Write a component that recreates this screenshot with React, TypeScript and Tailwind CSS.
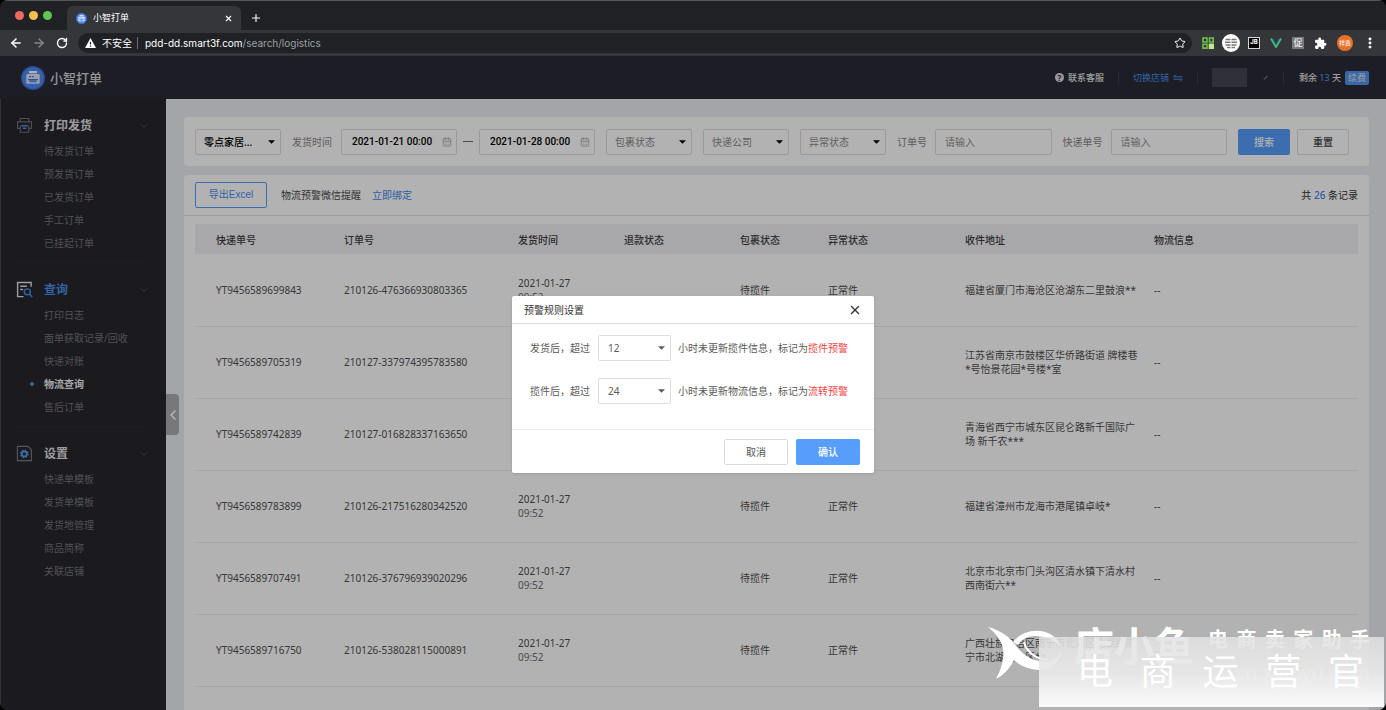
import { useState } from "react";
import type { ReactNode } from "react";
import {
  ArrowLeft,
  ArrowRight,
  CalendarDays,
  ChevronDown,
  ChevronLeft,
  EllipsisVertical,
  Plus,
  RotateCw,
  Star,
  X,
} from "lucide-react";
import { MdExtension } from "react-icons/md";

const menu = [
  {
    title: "打印发货",
    icon: "print",
    items: ["待发货订单", "预发货订单", "已发货订单", "手工订单", "已挂起订单"],
  },
  {
    title: "查询",
    icon: "search",
    items: ["打印日志", "面单获取记录/回收", "快递对账", "物流查询", "售后订单"],
  },
  {
    title: "设置",
    icon: "setting",
    items: ["快递单模板", "发货单模板", "发货地管理", "商品简称", "关联店铺"],
  },
];

const columns = [
  { title: "快递单号", width: "w-[137px]" },
  { title: "订单号", width: "w-[174px]" },
  { title: "发货时间", width: "w-[106px]" },
  { title: "退款状态", width: "w-[116px]" },
  { title: "包裹状态", width: "w-[88px]" },
  { title: "异常状态", width: "w-[137px]" },
  { title: "收件地址", width: "w-[189px]" },
  { title: "物流信息", width: "" },
];

const rows = [
  { no: "YT9456589699843", order: "210126-476366930803365", address: "福建省厦门市海沧区沧湖东二里鼓浪**" },
  { no: "YT9456589705319", order: "210127-337974395783580", address: "江苏省南京市鼓楼区华侨路街道 牌楼巷*号怡景花园*号楼*室" },
  { no: "YT9456589742839", order: "210127-016828337163650", address: "青海省西宁市城东区昆仑路新千国际广场 新千农***" },
  { no: "YT9456589783899", order: "210126-217516280342520", address: "福建省漳州市龙海市港尾镇卓岐*" },
  { no: "YT9456589707491", order: "210126-376796939020296", address: "北京市北京市门头沟区清水镇下清水村西南街六**" },
  { no: "YT9456589716750", order: "210126-538028115000891", address: "广西壮族自治区南宁市北湖区北湖路南宁市北湖路小区**" },
];

const Caret = () => (
  <svg viewBox="0 0 8 4" className="pointer-events-none absolute right-[6px] top-[11px] h-1 w-[7px]" fill="currentColor">
    <path d="M0 0h8L4 4z" />
  </svg>
);

const Logo = ({ className }: { className: string }) => (
  <svg viewBox="0 0 24 24" className={className}>
    <circle cx="12" cy="12" r="11.3" fill="#5189f5" stroke="#3f6fd8" strokeWidth="1.4" />
    <path d="M8 5h8v2.2H8z" fill="#fff" />
    <rect x="5.3" y="8" width="13.4" height="9.8" rx="1.2" fill="#dfe6f5" />
    <path d="M7 13.6h10M8.2 10.6h2M11 10.6h1.6" stroke="#3f6fd8" strokeWidth="1.4" />
    <path d="M8.4 14.3h7.2v2H8.4z" fill="#5189f5" />
  </svg>
);

const MenuIcon = ({ name }: { name: string }) => {
  if (name === "print") {
    return (
      <svg viewBox="0 0 18 18" className="size-[17px]" fill="none" stroke="#6d6e76" strokeWidth="1.2">
        <path d="M4.5 5V1.6h9V5M4.5 12H1.6V5.2h14.8V12h-2.9" />
        <path d="M4.5 9v7.2h9V9" />
        <path d="M5.5 9.2h7M7 12h4" stroke="#4a90e8" strokeWidth="1.6" />
      </svg>
    );
  }
  if (name === "search") {
    return (
      <svg viewBox="0 0 18 18" className="size-[17px]" fill="none" stroke="#e4e4e8" strokeWidth="1.5">
        <path d="M16 6V1.5H1.7v15H8M4.5 5.5h7M4.5 9h3" />
        <circle cx="12" cy="11.5" r="3.2" stroke="#4a90e8" />
        <path d="M14.4 14l2.8 3" stroke="#4a90e8" />
      </svg>
    );
  }
  return (
    <svg viewBox="0 0 18 18" className="size-[17px]" fill="none" stroke="#7b7c84" strokeWidth="1.2">
      <path d="M1.5 1.4h11.3l3.5 3.4v11.8H1.5z" />
      <circle cx="8.8" cy="9.4" r="2.6" stroke="#5a9cf0" strokeWidth="1.8" />
      <circle cx="8.8" cy="9.4" r="4" stroke="#5a9cf0" strokeWidth="1.5" strokeDasharray="1.6 1.54" />
    </svg>
  );
};

const BrowserBar = () => (
  <div className="shrink-0 bg-[#202124] text-white">
    <div className="flex h-[30px] items-end border-t border-[#55565a]">
      <div className="flex h-full w-[67px] items-center gap-[5px] pl-[15px]">
        <span className="size-[9px] rounded-full bg-[#ec6a5e]" />
        <span className="size-[9px] rounded-full bg-[#f4bf4f]" />
        <span className="size-[9px] rounded-full bg-[#61c554]" />
      </div>
      <div className="flex h-6 w-[174px] items-center rounded-t-md bg-[#35363a] pl-[9px] pr-2 text-[9px]">
        <Logo className="mr-[6px] size-[11px]" />
        <span className="grow">小智打单</span>
        <button aria-label="关闭标签页">
          <X className="size-[9px]" strokeWidth={3} />
        </button>
      </div>
      <button aria-label="新标签页" className="flex h-6 items-center pl-[9px]">
        <Plus className="size-3" strokeWidth={2.2} />
      </button>
    </div>
    <div className="flex h-[26px] items-center bg-[#35363a] pl-[9px] pr-[9px]">
      <button aria-label="后退">
        <ArrowLeft className="size-[14px]" strokeWidth={2.6} />
      </button>
      <button aria-label="前进" className="ml-[9px] text-[#86878b]">
        <ArrowRight className="size-[14px]" strokeWidth={2.4} />
      </button>
      <button aria-label="刷新" className="ml-[10px]">
        <RotateCw className="size-3" strokeWidth={2.8} />
      </button>
      <div className="ml-[10px] flex h-5 grow items-center rounded-full bg-[#202124] pl-[7px] pr-[6px] text-[10px]">
        <svg viewBox="0 0 12 11" className="mr-[6px] h-[10px] w-[11px]">
          <path d="M6 0l6 11H0z" fill="#fff" />
          <path d="M6 4v3.2M6 8.2v1.3" stroke="#202124" strokeWidth="1.3" />
        </svg>
        <span>不安全</span>
        <span className="mx-[5px] h-3 w-px bg-[#6b6c70]" />
        <span className="ml-[2px] grow font-[Inter]">
          pdd-dd.smart3f.com<span className="text-[#9aa0a6]">/search/logistics</span>
        </span>
        <Star className="size-3" />
      </div>
      <div className="ml-[10px] flex items-center gap-[10px]">
        <svg viewBox="0 0 12 12" className="size-3" fill="none" stroke="#6dbf4b" strokeWidth="1.6">
          <path d="M1 1h4v4H1zM7.5 1h3.7v4H7.5zM1 7.3h4v3.8H1z" />
          <path d="M7.5 7.3h3.7v3.8H7.5z" fill="#c6e48b" stroke="#c6e48b" />
        </svg>
        <svg viewBox="0 0 18 18" className="-mx-[2px] size-[18px]">
          <circle cx="9" cy="9" r="9" fill="#fff" />
          <path d="M3.5 5.5h5M9.5 5.5h5M3 8.2h5.5M9.5 8.2H15M3.5 11h5M9.5 11h5M5 13.5h3.5M9.5 13.5H13" stroke="#777" strokeWidth="1.4" />
        </svg>
        <span className="flex h-3 w-3 items-start justify-center border border-[#d5d5d5] bg-black font-[Inter] text-[6px] font-bold leading-[8px]">
          JB
        </span>
        <svg viewBox="0 0 12 10" className="h-[10px] w-3" fill="none">
          <path d="M1 .5l5 8.5L11 .5" stroke="#41b883" strokeWidth="2" />
          <path d="M3.4.5L6 5 8.6.5" stroke="#35495e" strokeWidth="1.2" />
        </svg>
        <span className="flex size-3 items-center justify-center bg-[#77787b] text-[9px] leading-3">促</span>
        <MdExtension className="size-[13px]" />
        <span className="flex size-4 items-center justify-center rounded-full bg-[#e8702a] text-[6px]">祥鑫</span>
        <EllipsisVertical className="size-[14px]" strokeWidth={3} />
      </div>
    </div>
  </div>
);

const Header = () => (
  <header className="flex h-[43px] shrink-0 items-center bg-[#292a36] pl-[21px] pr-[17px] text-[9px] text-[#e2e2e6]">
    <Logo className="size-6" />
    <span className="ml-[5px] grow text-[13px] font-medium text-[#d6d6da]">小智打单</span>
    <span className="mr-1 flex size-[9px] items-center justify-center rounded-full bg-[#dcdce0] text-[8px] font-bold leading-[9px] text-[#292a36]">
      ?
    </span>
    <span className="font-medium">联系客服</span>
    <span className="mx-[14px] h-3 w-px bg-[#3c3d49]" />
    <a href="#shop" className="flex items-center gap-1 text-[#4a8fe8]">
      切换店铺
      <svg viewBox="0 0 10 8" className="h-2 w-[10px]" fill="none" stroke="currentColor" strokeWidth="1">
        <path d="M3 .5L.8 2.8h8.7M7 7.5l2.2-2.3H.5" />
      </svg>
    </a>
    <span className="mx-[14px] h-3 w-px bg-[#3c3d49]" />
    <span className="h-[19px] w-[35px] bg-[#454652]" />
    <svg viewBox="0 0 6 6" className="ml-4 size-[5px]" fill="none" stroke="#a5a6ad" strokeWidth="1.1">
      <path d="M.8 4l1 1L5.4 1" />
    </svg>
    <span className="mx-[15px] h-3 w-px bg-[#3c3d49]" />
    <span className="font-medium">
      剩余 <span className="text-[#4a8fe8]">13</span> 天
    </span>
    <button className="ml-1 h-[14px] rounded-xs bg-[#4f93f2] px-[3px] leading-[14px]">续费</button>
  </header>
);

const Sidebar = () => (
  <aside className="relative w-[166px] shrink-0 border-l border-[#4a4a50] bg-[#27262c] pl-[15px] pr-[17px]">
    {menu.map((group) => (
      <section key={group.title} className="border-b border-[#2c2b32] pb-2 pt-3 last-of-type:border-0">
        <button className="flex h-7 w-full items-center pt-px text-left">
          <MenuIcon name={group.icon} />
          <span
            className={`ml-[11px] grow text-xs font-bold ${
              group.icon === "search" ? "text-[#4a8fe8]" : "text-[#e0e0e4]"
            }`}
          >
            {group.title}
          </span>
          <ChevronDown className="size-[10px] text-[#5a5a62]" />
        </button>
        <ul>
          {group.items.map((item) => (
            <li key={item} className="flex h-[23px] items-center">
              <span className={`ml-[14px] mr-[10px] size-1 rounded-full ${item === "物流查询" ? "bg-[#4a9be8]" : ""}`} />
              <a
                href="#menu"
                className={item === "物流查询" ? "font-bold text-[#f0f0f2]" : "text-[#75757c]"}
              >
                {item}
              </a>
            </li>
          ))}
        </ul>
      </section>
    ))}
    <button
      aria-label="收起菜单"
      className="absolute -right-[13px] top-[295px] flex h-[41px] w-[13px] items-center justify-center rounded-r bg-[#acacb0] text-white"
    >
      <ChevronLeft className="size-4 shrink-0" strokeWidth={2.5} />
    </button>
  </aside>
);

const FilterSelect = ({ label, dark }: { label: string; dark?: boolean }) => (
  <div className="relative w-[86px] shrink-0 text-black">
    <select
      aria-label={label}
      className={`h-[26px] w-full appearance-none rounded-xs border border-[#dcdde3] bg-white pl-2 ${
        dark ? "font-medium text-black" : "text-[#8a8a8a]"
      }`}
    >
      <option>{label}</option>
    </select>
    <Caret />
  </div>
);

const DateBox = ({ label, value }: { label: string; value: string }) => (
  <div className="relative w-[116px] shrink-0">
    <input
      aria-label={label}
      defaultValue={value}
      className="h-[26px] w-full rounded-xs border border-[#dcdde3] bg-white pl-[10px] font-[Roboto] font-medium text-black"
    />
    <CalendarDays className="absolute right-[5px] top-2 size-[10px] text-[#a9a9ad]" />
  </div>
);

const Field = ({ id, label }: { id: string; label: string }) => (
  <div className="flex grow items-center gap-2">
    <label htmlFor={id} className="shrink-0 text-[#858585]">
      {label}
    </label>
    <input
      id={id}
      placeholder="请输入"
      className="h-[26px] w-[112px] grow rounded-xs border border-[#dcdde3] bg-white px-[9px] placeholder:text-[#8e8e8e]"
    />
  </div>
);

const Filters = () => (
  <form className="flex h-[49px] shrink-0 items-center gap-[11px] rounded bg-white pl-[11px] pr-5">
    <FilterSelect label="零点家居..." dark />
    <div className="flex items-center gap-[9px] text-[#858585]">
      <span className="shrink-0">发货时间</span>
      <DateBox label="开始时间" value="2021-01-21 00:00" />
      <span className="-mx-[3px] h-px w-[10px] bg-[#6a6a6a]" />
      <DateBox label="结束时间" value="2021-01-28 00:00" />
    </div>
    <FilterSelect label="包裹状态" />
    <FilterSelect label="快递公司" />
    <FilterSelect label="异常状态" />
    <Field id="order-no" label="订单号" />
    <Field id="express-no" label="快递单号" />
    <div className="flex gap-[7px]">
      <button type="button" className="h-[26px] w-[52px] rounded-xs bg-[#579dfa] font-medium text-white">
        搜索
      </button>
      <button type="button" className="h-[26px] w-[52px] rounded-xs border border-[#dcdde3] bg-white font-medium text-[#444]">
        重置
      </button>
    </div>
  </form>
);

const LogisticsTable = () => (
  <section className="mt-[9px] grow rounded-t bg-white">
    <div className="flex h-[41px] items-center border-b border-[#dedee2] px-[11px] text-[#4a4a4a]">
      <button className="h-[26px] w-[72px] rounded-xs border border-[#579dfa] font-['Liberation_Sans','Noto_Sans_CJK_SC',sans-serif] text-[#4a90f0]">
        导出Excel
      </button>
      <span className="ml-[14px]">物流预警微信提醒</span>
      <a href="#bind" className="ml-[11px] text-[#3f86ea]">
        立即绑定
      </a>
      <span className="ml-auto text-[#333]">
        共 <span className="font-medium text-[#3f86ea]">26</span> 条记录
      </span>
    </div>
    <div className="px-[11px] pt-2">
      <table className="w-full table-fixed text-left text-[#4f4f4f]">
        <thead>
          <tr className="h-[30px] bg-[#f1f1f5] text-[#3c3c3c]">
            {columns.map((column) => (
              <th key={column.title} className={`pl-3 pt-[2px] font-medium first:pl-[21px] ${column.width}`}>
                {column.title}
              </th>
            ))}
          </tr>
        </thead>
        <tbody>
          {rows.map((row) => (
            <tr key={row.no} className="h-[72px] border-b border-[#eeeef1]">
              <td className="pl-[21px]">{row.no}</td>
              <td className="pl-3">{row.order}</td>
              <td className="pl-3">
                <span className="block">2021-01-27</span>
                <span className="block text-[#6e6e6e]">09:52</span>
              </td>
              <td className="pl-3" />
              <td className="pl-3">待揽件</td>
              <td className="pl-3">正常件</td>
              <td className="pl-3">{row.address}</td>
              <td className="pl-3">--</td>
            </tr>
          ))}
        </tbody>
      </table>
    </div>
  </section>
);

type RuleRowProps = { id: string; before: string; after: string; mark: string; value: string };

const RuleRow = ({ id, before, after, mark, value }: RuleRowProps) => (
  <div className="flex items-center text-[#5a5a5a]">
    <label htmlFor={id}>{before}</label>
    <div className="relative ml-2 mr-[7px] w-[73px]">
      <select
        id={id}
        defaultValue={value}
        className="h-[26px] w-full appearance-none rounded-xs border border-[#dcdee4] bg-white pl-[9px]"
      >
        <option>12</option>
        <option>24</option>
      </select>
      <Caret />
    </div>
    <span>
      {after}
      <span className="text-[#f0453f]">{mark}</span>
    </span>
  </div>
);

const Overlay = ({ children }: { children: ReactNode }) => (
  <div className="absolute inset-0 z-10 flex items-center justify-center bg-black/30">{children}</div>
);

const RuleDialog = ({ onClose }: { onClose: () => void }) => (
  <div role="dialog" aria-label="预警规则设置" className="mt-[3px] w-[362px] rounded-xs bg-white shadow-sm">
    <div className="flex h-7 items-center justify-between border-b border-[#dcdce0] px-3 text-[#333]">
      <h2>预警规则设置</h2>
      <button aria-label="关闭" onClick={onClose}>
        <X className="size-[14px]" strokeWidth={2.4} />
      </button>
    </div>
    <div className="flex h-[105px] flex-col gap-[17px] px-[18px] pt-[11px]">
      <RuleRow id="rule-collect" before="发货后，超过" after="小时未更新揽件信息，标记为" mark="揽件预警" value="12" />
      <RuleRow id="rule-transfer" before="揽件后，超过" after="小时未更新物流信息，标记为" mark="流转预警" value="24" />
    </div>
    <div className="flex h-11 items-center justify-end gap-2 border-t border-[#eeeef1] pr-[14px]">
      <button onClick={onClose} className="h-[26px] w-16 rounded-xs border border-[#d9dbe2] bg-white text-[#555]">
        取消
      </button>
      <button onClick={onClose} className="h-[26px] w-16 rounded-xs bg-[#579efa] font-medium text-white">
        确认
      </button>
    </div>
  </div>
);

const Watermark = () => (
  <div className="pointer-events-none absolute bottom-[3px] right-[2px] z-20 h-[84px] w-[396px] text-white">
    <svg viewBox="0 0 76 58" className="absolute left-0 top-0 h-[58px] w-[76px]" fill="#fff">
      <path d="M0 4C14 8 22 14 29 24c7 9 17 15 31 15 6-1 10-5 14-12-2 13-11 21-24 20-10-1-18-4-24-10C22 45 16 52 8 56c7-13 9-25 6-34C11 14 6 9 0 4z" />
      <path d="M25 19C33 9 47 5 60 10c7 3 12 9 15 16-8-9-18-13-28-13-7 0-13 3-17 9z" />
      <path d="M36 19c2 9 11 17 24 18" fill="none" stroke="#fff" strokeWidth="2" />
    </svg>
    <div className="absolute left-[86px] top-0 flex gap-[14px]">
      <span className="text-[40px] font-bold leading-[46px]">店小鱼</span>
      <div className="w-[162px]">
        <div className="flex justify-between text-xl font-bold leading-[34px]">
          {"电商卖家助手".split("").map((char) => (
            <span key={char}>{char}</span>
          ))}
        </div>
        <p className="text-right text-xl leading-8">cn.xiaoyu.com</p>
      </div>
    </div>
    <div className="absolute bottom-0 right-0 flex h-[70px] w-[345px] items-center justify-between bg-linear-to-b from-[#e2e2e2]/85 via-[#e8e8e8]/95 to-[#fafafa] pl-[38px] pr-5 text-[36px]">
      {"电商运营官".split("").map((char) => (
        <span key={char}>{char}</span>
      ))}
    </div>
  </div>
);

const App = () => {
  const [open, setOpen] = useState(true);

  return (
    <div className="bg-black">
      <div className="relative flex h-screen flex-col overflow-hidden rounded-lg bg-[#202124] font-['Noto_Sans','Noto_Sans_CJK_SC',sans-serif] text-[10px] leading-[14px]">
        <BrowserBar />
        <div className="relative flex min-h-0 grow flex-col">
          <Header />
          <div className="flex min-h-0 grow">
            <Sidebar />
            <main className="flex min-w-0 grow flex-col overflow-hidden bg-[#ebecf2] pl-[18px] pr-[17px] pt-[18px]">
              <Filters />
              <LogisticsTable />
            </main>
          </div>
          {open && (
            <Overlay>
              <RuleDialog onClose={() => setOpen(false)} />
            </Overlay>
          )}
        </div>
        <Watermark />
      </div>
    </div>
  );
};

export default App;
